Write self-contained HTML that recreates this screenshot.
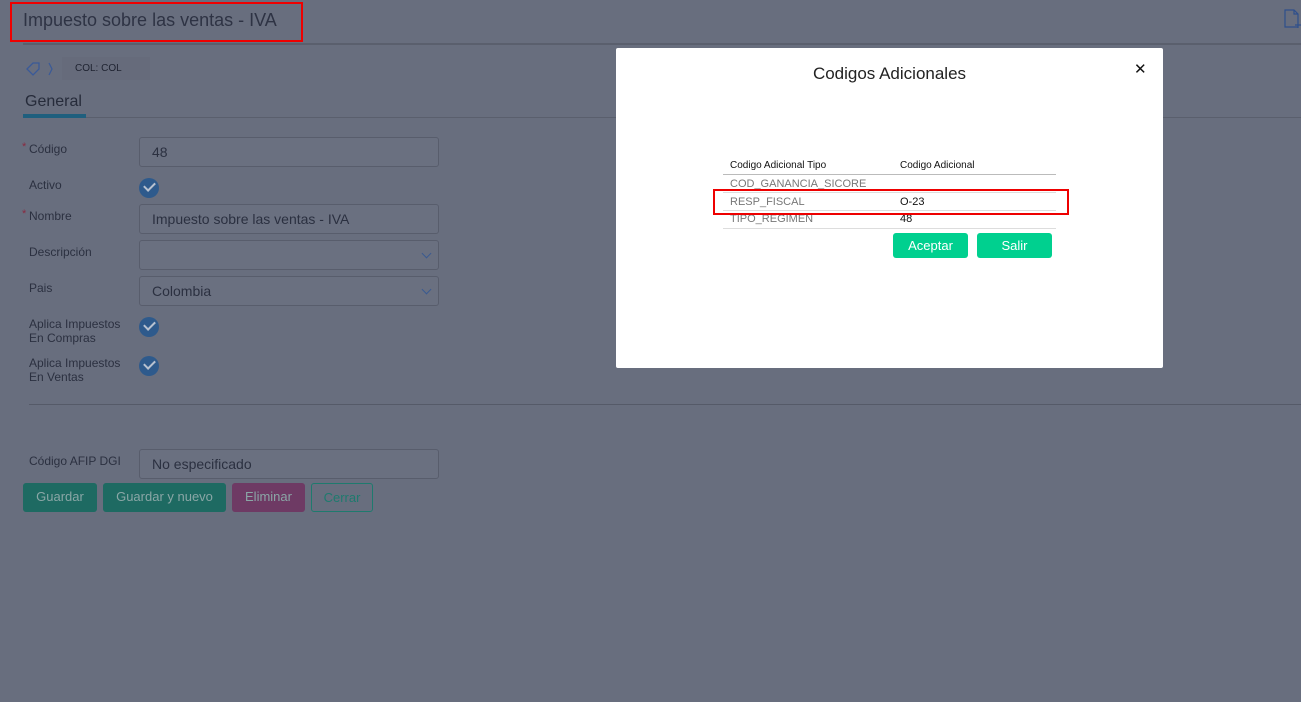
<!DOCTYPE html>
<html><head><meta charset="utf-8"><style>
*{box-sizing:border-box;margin:0;padding:0}
body{width:1301px;height:702px;overflow:hidden;background:#686e7e;font-family:"Liberation Sans",sans-serif;position:relative;color:#2b3040}
.a{position:absolute}
.lbl{position:absolute;left:29px;font-size:12px;color:#2b3040;line-height:14px}
.inp{position:absolute;left:139px;width:300px;height:30px;border:1px solid #585d6c;border-radius:3px;background:#6a7080;font-size:14px;padding:6px 12px;color:#2b3040}
.chk{position:absolute;left:139px;width:20px;height:20px;border-radius:50%;background:#2e5a8c}
.chk:after{content:"";position:absolute;left:5px;top:4px;width:9px;height:5px;border-left:2px solid #b8c2d0;border-bottom:2px solid #b8c2d0;transform:rotate(-45deg)}
.chev{position:absolute;right:8px;top:9px;width:7px;height:7px;border-right:1.5px solid #3a5a90;border-bottom:1.5px solid #3a5a90;transform:rotate(45deg)}
.btn{position:absolute;top:483px;height:29px;border-radius:3px;font-size:13px;color:#8aa6a6;text-align:center;line-height:27px}
.star{color:#8a2a40;font-size:11px;position:absolute;left:22px}
.mb{position:absolute;top:233px;width:75px;height:25px;background:#00d08f;border-radius:3px;color:#fff;font-size:13px;text-align:center;line-height:25px}
.row{position:absolute;left:723px;width:333px;border-bottom:1px solid #ddd;font-size:11px;height:18px}
</style></head><body>
<div class="a" style="left:23px;top:10px;font-size:18px;color:#2e3344">Impuesto sobre las ventas - IVA</div>
<div class="a" style="left:10px;top:2px;width:293px;height:40px;border:2px solid #e00"></div>
<div class="a" style="left:23px;top:43px;width:1278px;height:2px;background:#5a5f6d"></div>
<svg class="a" style="left:1284px;top:9px" width="17" height="20" viewBox="0 0 17 20"><path d="M1 1h9l4 4v13H1z M10 1v4h4 M14 12v7 M11 16h6" fill="none" stroke="#2e4f8c" stroke-width="1.2"/></svg>
<svg class="a" style="left:25px;top:61px" width="30" height="16"><path d="M2 8l6-6h6v6l-6 6z" fill="none" stroke="#3a5a98" stroke-width="1.3"/><path d="M24 2l3 6-3 6" fill="none" stroke="#3a5a98" stroke-width="1.2"/></svg>
<div class="a" style="left:62px;top:57px;width:88px;height:23px;background:#666b7b;font-size:10px;line-height:23px;padding-left:13px;color:#1e2230">COL: COL</div>
<div class="a" style="left:25px;top:93px;font-size:16px;color:#262b3a">General</div>
<div class="a" style="left:23px;top:114px;width:63px;height:4px;background:#1f5f7e"></div>
<div class="a" style="left:86px;top:117px;width:1215px;height:1px;background:#5a5f6d"></div>
<span class="star" style="top:141px">*</span><div class="lbl" style="top:142px">Código</div>
<div class="inp" style="top:137px">48</div>
<div class="lbl" style="top:178px">Activo</div><div class="chk" style="top:178px"></div>
<span class="star" style="top:208px">*</span><div class="lbl" style="top:209px">Nombre</div>
<div class="inp" style="top:204px">Impuesto sobre las ventas - IVA</div>
<div class="lbl" style="top:245px">Descripción</div><div class="inp" style="top:240px"><div class="chev"></div></div>
<div class="lbl" style="top:281px">Pais</div><div class="inp" style="top:276px">Colombia<div class="chev"></div></div>
<div class="lbl" style="top:317px">Aplica Impuestos<br>En Compras</div><div class="chk" style="top:317px"></div>
<div class="lbl" style="top:356px">Aplica Impuestos<br>En Ventas</div><div class="chk" style="top:356px"></div>
<div class="a" style="left:29px;top:404px;width:1272px;height:1px;background:#555a68"></div>
<div class="lbl" style="top:454px">Código AFIP DGI</div><div class="inp" style="top:449px">No especificado</div>
<div class="btn" style="left:23px;width:74px;background:#1e6a62">Guardar</div>
<div class="btn" style="left:103px;width:123px;background:#1e6a62">Guardar y nuevo</div>
<div class="btn" style="left:232px;width:73px;background:#6e3a64">Eliminar</div>
<div class="btn" style="left:311px;width:62px;border:1px solid #1e7a6e;color:#1e7a6e">Cerrar</div>
<div class="a" style="left:616px;top:48px;width:547px;height:320px;background:#fff;border-radius:2px"></div>
<div class="a" style="left:616px;top:64px;width:547px;text-align:center;font-size:17px;color:#222">Codigos Adicionales</div>
<div class="a" style="left:1134px;top:60px;font-size:15px;color:#111">✕</div>
<div class="row" style="top:157px;color:#111;padding-left:7px;padding-top:3px;border-bottom-color:#bbb;font-size:10px">Codigo Adicional Tipo<span class="a" style="left:177px">Codigo Adicional</span></div>
<div class="row" style="top:175px;color:#777;padding-left:7px;padding-top:3px">COD_GANANCIA_SICORE</div>
<div class="row" style="top:193px;color:#777;padding-left:7px;padding-top:3px">RESP_FISCAL<span class="a" style="left:177px;color:#111">O-23</span></div>
<div class="row" style="top:211px;color:#777;padding-left:7px;padding-top:2px">TIPO_REGIMEN<span class="a" style="left:177px;color:#111">48</span></div>
<div class="a" style="left:713px;top:189px;width:356px;height:26px;border:2px solid #e00"></div>
<div class="mb" style="left:893px">Aceptar</div>
<div class="mb" style="left:977px">Salir</div>
</body></html>
